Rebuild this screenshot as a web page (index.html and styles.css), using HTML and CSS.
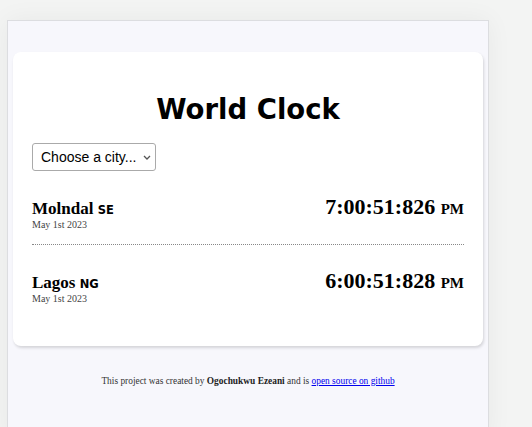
FILE: index.html
```html
<!DOCTYPE html>
<html lang="en">
<head>
<meta charset="utf-8">
<title>World Clock</title>
<link rel="stylesheet" href="styles.css">
</head>
<body>
<div class="page">
  <div class="card">
    <h1 class="title">World Clock</h1>
    <div class="select-wrap">
      <select class="city-select">
        <option>Choose a city...</option>
      </select>
      <svg class="select-arrow" width="8" height="5" viewBox="0 0 8 5" aria-hidden="true">
        <path d="M1 1 L4 4 L7 1" fill="none" stroke="#555" stroke-width="1.3"/>
      </svg>
    </div>
    <div class="cities">
      <div class="city">
        <div class="city-info">
          <h2 class="city-name">Molndal <span class="country">SE</span></h2>
          <div class="date">May 1st 2023</div>
        </div>
        <div class="time">7:00:51:826 <small class="ampm">PM</small></div>
      </div>
      <div class="city">
        <div class="city-info">
          <h2 class="city-name">Lagos <span class="country">NG</span></h2>
          <div class="date">May 1st 2023</div>
        </div>
        <div class="time">6:00:51:828 <small class="ampm">PM</small></div>
      </div>
    </div>
  </div>
  <footer class="footer">This project was created by <strong>Ogochukwu Ezeani</strong> and is <a href="#">open source on github</a></footer>
</div>
</body>
</html>
```
FILE: styles.css
```css
html {
  background: #f3f4f3;
}
body {
  margin: 0;
  font-family: "Liberation Serif", "Times New Roman", serif;
  color: #000;
}
.page {
  box-sizing: border-box;
  margin: 20px 0 0 7px;
  width: 482px;
  min-height: 420px;
  padding: 31px 5px 0;
  background: #f7f7fc;
  border: 1px solid #dcdde0;
  box-shadow: 0 0 24px rgba(0, 0, 0, 0.05);
}
.card {
  background: #fff;
  border-radius: 8px;
  padding: 20px 19px 28px;
  box-shadow: 1px 2px 3px rgba(0, 0, 0, 0.14);
}
.title {
  margin: 21px 0 18px;
  text-align: center;
  font-family: "DejaVu Sans", Verdana, sans-serif;
  font-size: 27.5px;
  font-weight: bold;
  line-height: normal;
}
.select-wrap {
  position: relative;
  width: 124px;
  height: 28px;
}
.city-select {
  display: block;
  box-sizing: border-box;
  width: 124px;
  height: 28px;
  padding: 0 8px;
  font-family: "Liberation Sans", Arial, sans-serif;
  font-size: 14px;
  color: #000;
  background: #fff;
  border: 1px solid #aaa;
  border-radius: 3px;
  -webkit-appearance: none;
  appearance: none;
}
.select-arrow {
  position: absolute;
  right: 5px;
  top: 12px;
  pointer-events: none;
}
.city {
  display: flex;
  justify-content: space-between;
  align-items: baseline;
  padding: 23px 0 14px;
  border-bottom: 1px dotted #888;
}
.city:last-child {
  border-bottom: none;
}
.city-name {
  margin: 0;
  font-size: 17px;
  font-weight: bold;
  line-height: normal;
}
.country {
  font-family: "DejaVu Sans", Verdana, sans-serif;
  font-size: 11.5px;
  font-weight: bold;
}
.date {
  font-size: 10px;
  color: #444;
}
.time {
  font-size: 22px;
  font-weight: bold;
  line-height: normal;
}
.ampm {
  font-size: 15px;
}
.footer {
  margin-top: 30px;
  text-align: center;
  font-size: 9.4px;
  color: #333;
}
.footer strong {
  color: #222;
}
.footer a {
  color: #00e;
}
```
